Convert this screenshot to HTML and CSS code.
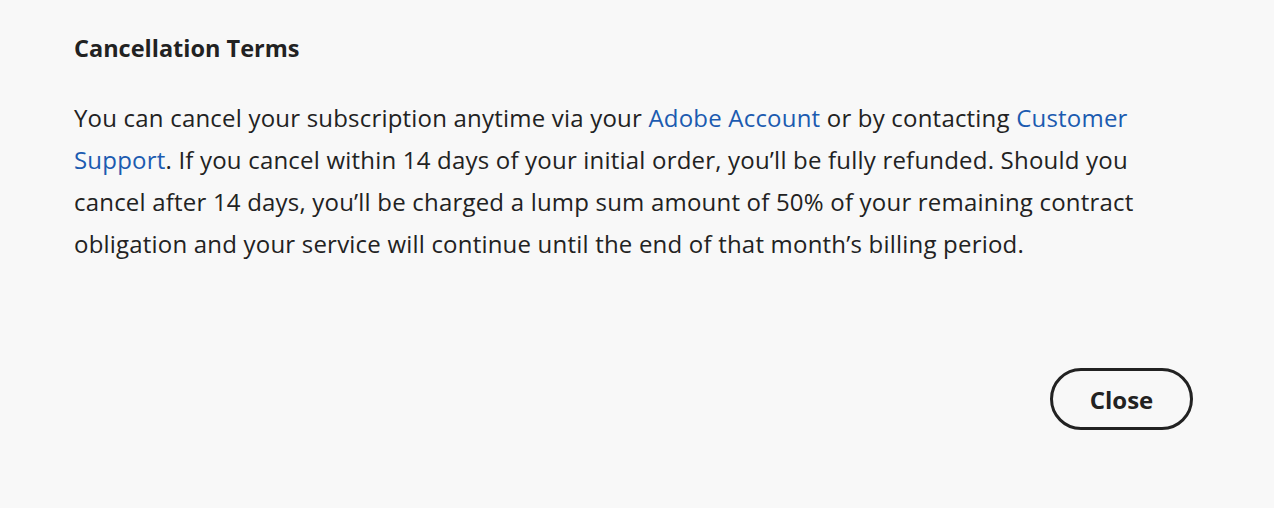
FILE: index.html
```html
<!DOCTYPE html>
<html lang="en">
<head>
<meta charset="utf-8">
<title>Cancellation Terms</title>
<link rel="stylesheet" href="styles.css">
</head>
<body>
<div class="dialog">
  <h2 class="title">Cancellation Terms</h2>
  <p class="body">You can cancel your subscription anytime via your <a href="#" class="link">Adobe Account</a> or by contacting <a href="#" class="link">Customer Support</a>. If you cancel within 14 days of your initial order, you’ll be fully refunded. Should you cancel after 14 days, you’ll be charged a lump sum amount of 50% of your remaining contract obligation and your service will continue until the end of that month’s billing period.</p>
  <div class="actions">
    <button class="btn">Close</button>
  </div>
</div>
</body>
</html>
```
FILE: styles.css
```css
html, body {
  margin: 0;
  padding: 0;
  background: #f8f8f8;
}
body {
  font-family: "Open Sans", Lato, sans-serif;
  color: #222222;
  width: 1274px;
  height: 508px;
  overflow: hidden;
}
.dialog {
  padding: 33px 74px 0 74px;
  display: flex;
  flex-direction: column;
}
.title {
  margin: 0;
  font-size: 23.5px;
  font-weight: 700;
  line-height: 30px;
}
.body {
  margin: 34px 0 0 0;
  font-size: 24px;
  letter-spacing: 0.2px;
  line-height: 42px;
  max-width: 1070px;
}
.link {
  color: #1c5bb0;
  text-decoration: none;
}
.actions {
  display: flex;
  justify-content: flex-end;
  padding-right: 7px;
  margin-top: 103px;
}
.btn {
  font-family: inherit;
  background: transparent;
  color: #222222;
  border: 3px solid #222222;
  border-radius: 31px;
  width: 143px;
  height: 62px;
  font-size: 24px;
  font-weight: 700;
  padding: 0;
}
```
